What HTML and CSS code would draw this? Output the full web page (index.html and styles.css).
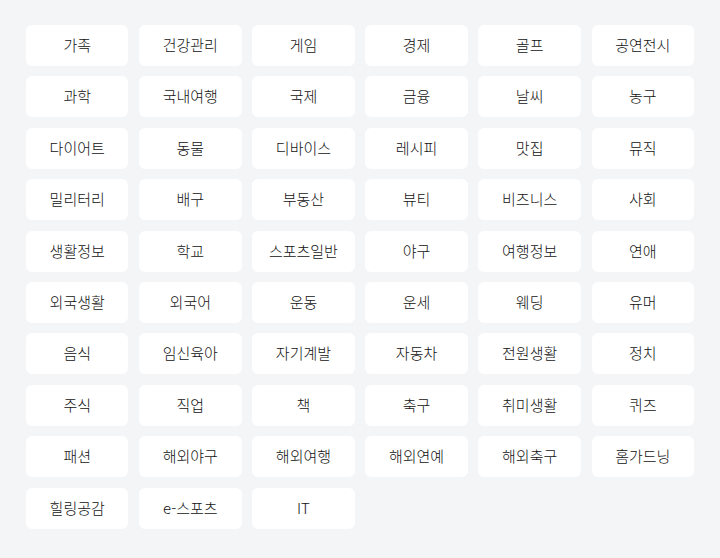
FILE: index.html
```html
<!DOCTYPE html>
<html lang="ko">
<head>
    <meta charset="UTF-8">
    <meta name="viewport" content="width=device-width, initial-scale=1.0">
    <title>관심 주제</title>
    <link rel="stylesheet" href="styles.css">
</head>
<body>

    <div class="topics">
        <button class="topic">가족</button>
        <button class="topic">건강관리</button>
        <button class="topic">게임</button>
        <button class="topic">경제</button>
        <button class="topic">골프</button>
        <button class="topic">공연전시</button>
        <button class="topic">과학</button>
        <button class="topic">국내여행</button>
        <button class="topic">국제</button>
        <button class="topic">금융</button>
        <button class="topic">날씨</button>
        <button class="topic">농구</button>
        <button class="topic">다이어트</button>
        <button class="topic">동물</button>
        <button class="topic">디바이스</button>
        <button class="topic">레시피</button>
        <button class="topic">맛집</button>
        <button class="topic">뮤직</button>
        <button class="topic">밀리터리</button>
        <button class="topic">배구</button>
        <button class="topic">부동산</button>
        <button class="topic">뷰티</button>
        <button class="topic">비즈니스</button>
        <button class="topic">사회</button>
        <button class="topic">생활정보</button>
        <button class="topic">학교</button>
        <button class="topic">스포츠일반</button>
        <button class="topic">야구</button>
        <button class="topic">여행정보</button>
        <button class="topic">연애</button>
        <button class="topic">외국생활</button>
        <button class="topic">외국어</button>
        <button class="topic">운동</button>
        <button class="topic">운세</button>
        <button class="topic">웨딩</button>
        <button class="topic">유머</button>
        <button class="topic">음식</button>
        <button class="topic">임신육아</button>
        <button class="topic">자기계발</button>
        <button class="topic">자동차</button>
        <button class="topic">전원생활</button>
        <button class="topic">정치</button>
        <button class="topic">주식</button>
        <button class="topic">직업</button>
        <button class="topic">책</button>
        <button class="topic">축구</button>
        <button class="topic">취미생활</button>
        <button class="topic">퀴즈</button>
        <button class="topic">패션</button>
        <button class="topic">해외야구</button>
        <button class="topic">해외여행</button>
        <button class="topic">해외연예</button>
        <button class="topic">해외축구</button>
        <button class="topic">홈가드닝</button>
        <button class="topic">힐링공감</button>
        <button class="topic">e-스포츠</button>
        <button class="topic">IT</button>
    </div>

</body>
</html>
```

FILE: styles.css
```css
body {
    margin: 0;
    background-color: #f4f5f7;
    font-family: "Noto Sans CJK KR", "Noto Sans", sans-serif;
}
.topics {
    display: grid;
    grid-template-columns: repeat(6, 1fr);
    column-gap: 10.7px;
    row-gap: 10.4px;
    padding: 25px 26px;
}
.topic {
    height: 41px;
    padding: 0 0 2px;
    border: none;
    border-radius: 6px;
    background-color: #fff;
    color: #111;
    font-family: inherit;
    font-size: 15px;
    font-weight: 300;
    cursor: pointer;
}
```
